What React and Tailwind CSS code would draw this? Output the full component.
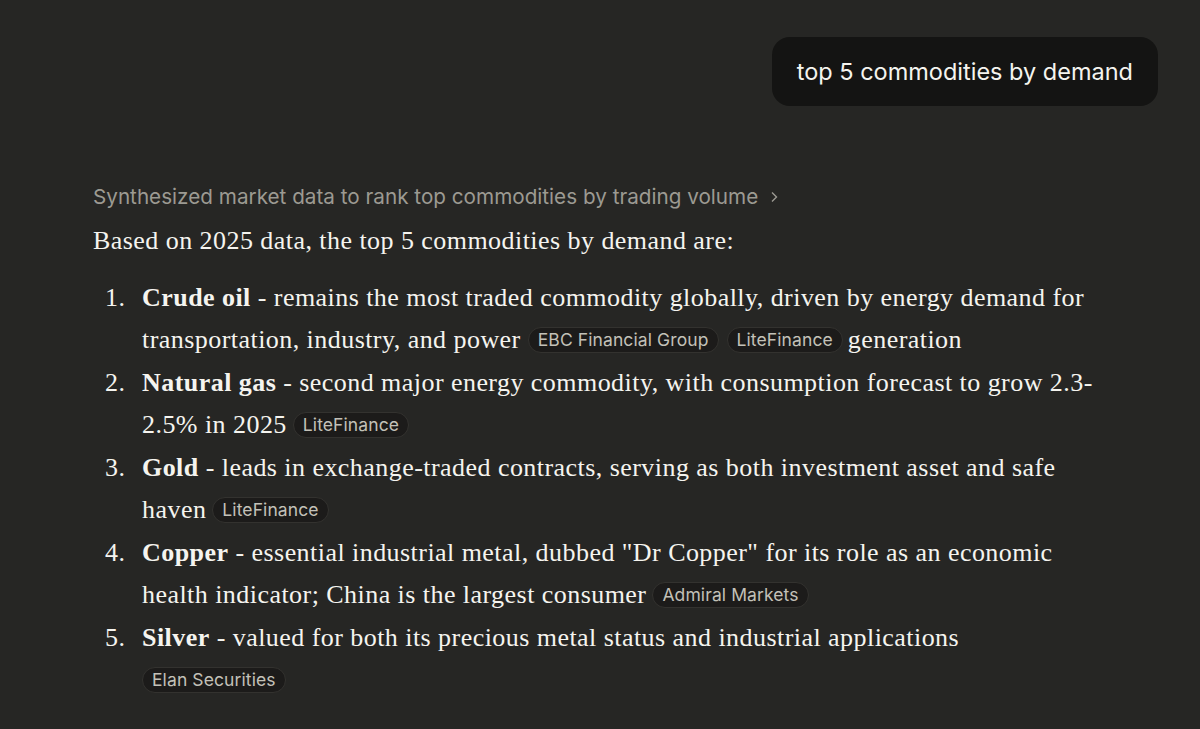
import React from "react";

const serif = { fontFamily: '"Liberation Serif", "DejaVu Serif", serif' };

const Chip = ({ children, className = "ml-[6px]" }) => (
    <span
        className={
            "inline-flex items-center align-middle h-[26px] px-[9px] -mt-[4px] rounded-full bg-[#1c1b1a] border border-[#33322f] text-[17.5px] leading-none text-[#c3c1b8] font-['Inter',sans-serif] tracking-[0.1px] whitespace-nowrap " +
            className
        }
    >
        {children}
    </span>
);

const items = [
    {
        title: "Crude oil",
        lines: [
            <>remains the most traded commodity globally, driven by energy demand for</>,
            <>
                transportation, industry, and power<Chip className="ml-[7px]">EBC Financial Group</Chip>
                <Chip className="ml-[8px]">LiteFinance</Chip>
                <span className="ml-[5px]">generation</span>
            </>,
        ],
    },
    {
        title: "Natural gas",
        lines: [
            <>second major energy commodity, with consumption forecast to grow 2.3-</>,
            <>2.5% in 2025<Chip>LiteFinance</Chip></>,
        ],
    },
    {
        title: "Gold",
        lines: [
            <>leads in exchange-traded contracts, serving as both investment asset and safe</>,
            <>haven<Chip>LiteFinance</Chip></>,
        ],
    },
    {
        title: "Copper",
        lines: [
            <>essential industrial metal, dubbed "Dr Copper" for its role as an economic</>,
            <>health indicator; China is the largest consumer<Chip>Admiral Markets</Chip></>,
        ],
    },
    {
        title: "Silver",
        lines: [
            <>valued for both its precious metal status and industrial applications</>,
            <><Chip className="ml-0">Elan Securities</Chip></>,
        ],
    },
];

export default function App() {
    return (
        <div className="w-[1200px] h-[729px] bg-[#262624] overflow-hidden">
            <div className="flex justify-end pt-[37px] pr-[42px]">
                <div className="h-[69px] px-[25px] flex items-center rounded-[18px] bg-[#141413] text-[23.5px] text-[#f5f4ef] font-['Inter',sans-serif]">
                    top 5 commodities by demand
                </div>
            </div>

            <div className="pl-[93px] pt-[76px]">
                <div className="flex items-center gap-[10px] text-[20.7px] text-[#9c9a92] font-['Inter',sans-serif] leading-[30px]">
                    <span>Synthesized market data to rank top commodities by trading volume</span>
                    <svg width="12" height="12" viewBox="0 0 12 12" fill="none" stroke="currentColor" strokeWidth="1.4">
                        <path d="M4 1.5 L8.5 6 L4 10.5" />
                    </svg>
                </div>

                <p className="mt-[8px] text-[26px] tracking-[0.45px] leading-[42px] text-[#f5f4ef]" style={serif}>
                    Based on 2025 data, the top 5 commodities by demand are:
                </p>

                <ol className="mt-[15px] flex flex-col gap-[1px] text-[26px] tracking-[0.45px] leading-[42px] text-[#f5f4ef]" style={serif}>
                    {items.map((it, i) => (
                        <li key={it.title} className="flex">
                            <span className="w-[49px] pl-[12px] shrink-0">{i + 1}.</span>
                            <div>
                                <div className="whitespace-nowrap">
                                    <span className="font-bold">{it.title}</span> - {it.lines[0]}
                                </div>
                                <div className="whitespace-nowrap">{it.lines[1]}</div>
                            </div>
                        </li>
                    ))}
                </ol>
            </div>
        </div>
    );
}
